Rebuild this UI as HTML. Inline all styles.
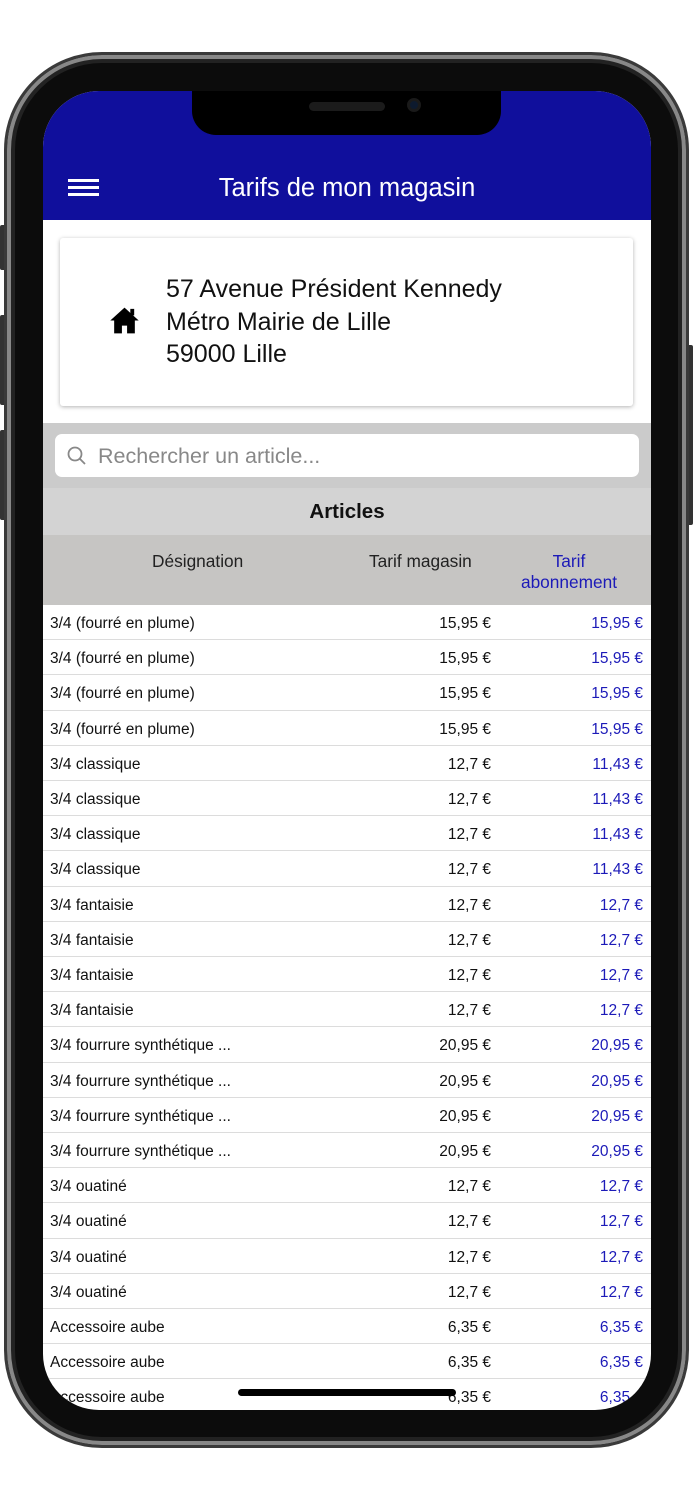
<!DOCTYPE html>
<html><head><meta charset="utf-8"><style>
*{margin:0;padding:0;box-sizing:border-box}
body{width:693px;height:1500px;background:#fff;position:relative;overflow:hidden;font-family:"Liberation Sans",sans-serif}
.abs{position:absolute}
.phone{left:4px;top:52px;width:685px;height:1396px;border-radius:98px;background:#0c0c0c;border:3px solid #3a3a3a;box-shadow:inset 0 0 0 4px #888,inset 0 0 0 8px #222}
.screen{left:43px;top:91px;width:608px;height:1319px;border-radius:56px;overflow:hidden;background:#fff}
.hdr{left:0;top:0;width:608px;height:129px;background:#100f9c}
.title{left:0;width:608px;top:83px;text-align:center;color:#fff;font-size:25.5px}
.notch{left:149px;top:0;width:309px;height:44px;background:#000;border-radius:0 0 24px 24px}
.row{position:absolute;left:0;width:608px;height:35.2px;border-bottom:1.5px solid #dcdcdc;font-size:15.5px;color:#111}
.row span{position:absolute;top:10px}
.d{left:7px}.m{right:160px}.a{right:8px;color:#1c1ab8}
</style></head><body>
<div class="abs" style="left:0;top:225px;width:6px;height:45px;background:#333;border-radius:2px"></div>
<div class="abs" style="left:0;top:315px;width:6px;height:90px;background:#333;border-radius:2px"></div>
<div class="abs" style="left:0;top:430px;width:6px;height:90px;background:#333;border-radius:2px"></div>
<div class="abs" style="left:687px;top:345px;width:6px;height:180px;background:#333;border-radius:2px"></div>
<div class="abs phone"></div>
<div class="abs screen">
 <div class="abs hdr"></div>
 <div class="abs notch"></div>
 <div class="abs" style="left:266px;top:11px;width:76px;height:9px;background:#1b1b1b;border-radius:5px"></div>
 <div class="abs" style="left:364px;top:7px;width:14px;height:14px;background:#0d1a2e;border-radius:50%;border:3px solid #1a1a1a"></div>
 <div class="abs" style="left:25px;top:88px;width:31px;height:3px;background:#fff"></div>
 <div class="abs" style="left:25px;top:95px;width:31px;height:3px;background:#fff"></div>
 <div class="abs" style="left:25px;top:102px;width:31px;height:3px;background:#fff"></div>
 <div class="abs title">Tarifs de mon magasin</div>
 <div class="abs" style="left:17px;top:147px;width:573px;height:168px;background:#fff;border-radius:3px;box-shadow:0 1px 4px rgba(0,0,0,.3)"></div>
 <svg class="abs" style="left:66px;top:214px" width="31" height="31" viewBox="0 0 24 24"><path d="M12 2 1 12h3v10h6v-6h4v6h6V12h3L12 2z" fill="#000"/><rect x="16.5" y="3" width="3" height="5" fill="#000"/></svg>
 <div class="abs" style="left:123px;top:182px;font-size:25px;line-height:32.5px;color:#111">57 Avenue Président Kennedy<br>Métro Mairie de Lille<br>59000 Lille</div>
 <div class="abs" style="left:0;top:332px;width:608px;height:65px;background:#cbcbcb"></div>
 <div class="abs" style="left:12px;top:343px;width:584px;height:43px;background:#fff;border-radius:7px"></div>
 <svg class="abs" style="left:24px;top:355px" width="20" height="20" viewBox="0 0 20 20"><circle cx="8" cy="8" r="6.5" stroke="#888" stroke-width="1.8" fill="none"/><path d="M12.8 12.8 18 18" stroke="#888" stroke-width="1.8"/></svg>
 <div class="abs" style="left:55px;top:353px;font-size:21.5px;color:#888">Rechercher un article...</div>
 <div class="abs" style="left:0;top:397px;width:608px;height:47px;background:#d3d3d3;text-align:center;font-weight:bold;font-size:20.5px;line-height:47px;color:#111">Articles</div>
 <div class="abs" style="left:0;top:444px;width:608px;height:70px;background:#c6c5c3;font-size:17.3px;color:#222">
  <span class="abs" style="left:109px;top:16px">Désignation</span>
  <span class="abs" style="left:326px;top:16px">Tarif magasin</span>
  <span class="abs" style="left:452px;top:16px;width:148px;text-align:center;color:#1c1ab8;line-height:21px">Tarif<br>abonnement</span>
 </div>
 <div id="rows" class="abs" style="left:0;top:514px;width:608px;height:805px"></div>
 <div class="abs" style="left:195px;top:1298px;width:218px;height:7px;background:#000;border-radius:4px"></div>
</div>
<script>
var data=[["3/4 (fourré en plume)","15,95 €","15,95 €",4],["3/4 classique","12,7 €","11,43 €",4],["3/4 fantaisie","12,7 €","12,7 €",4],["3/4 fourrure synthétique ...","20,95 €","20,95 €",4],["3/4 ouatiné","12,7 €","12,7 €",4],["Accessoire aube","6,35 €","6,35 €",3]];
var h="",i=0;data.forEach(function(r){for(var k=0;k<r[3];k++){h+='<div class="row" style="top:'+(i*35.2)+'px"><span class="d">'+r[0]+'</span><span class="m">'+r[1]+'</span><span class="a">'+r[2]+'</span></div>';i++;}});
document.getElementById("rows").innerHTML=h;
</script>
</body></html>
